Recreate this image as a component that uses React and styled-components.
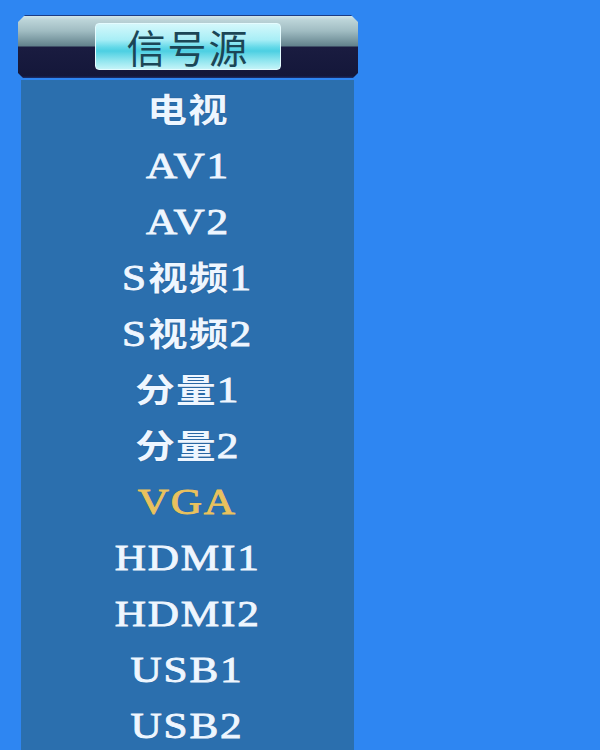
import React from "react";
import styled, { createGlobalStyle } from "styled-components";

const Global = createGlobalStyle`
  html, body { margin: 0; padding: 0; background: #2e86f2; }
  #root { width: 600px; height: 750px; overflow: hidden; }
`;

const Screen = styled.div`
  width: 600px;
  height: 750px;
  background: #2e86f2;
  padding: 15px 0 0 18px;
  box-sizing: border-box;
  overflow: hidden;
`;

const Panel = styled.div`
  width: 340px;
  display: flex;
  flex-direction: column;
`;

const Header = styled.div`
  height: 63px;
  box-sizing: border-box;
  padding-top: 8px;
  display: flex;
  justify-content: center;
  background: linear-gradient(
    to bottom,
    #1c3c84 0px,
    #1c3c84 1px,
    #d2e6ea 1px,
    #bcd4d8 5px,
    #a0bcc2 16px,
    #62828c 31px,
    #1a1c40 32px,
    #14173a 61px,
    #1c3070 63px
  );
  clip-path: polygon(7px 0, 333px 0, 340px 7px, 340px 58px, 335px 63px, 5px 63px, 0 58px, 0 7px);
`;

const TitleBadge = styled.div`
  width: 186px;
  height: 47px;
  box-sizing: border-box;
  border: 1px solid #e4fcff;
  border-radius: 4px;
  background: linear-gradient(
    to bottom,
    #d4f8fb 0%,
    #a8eef6 35%,
    #62d8e8 52%,
    #4ccfe2 60%,
    #8ce4ee 80%,
    #c4f4f8 100%
  );
  display: flex;
  align-items: center;
  justify-content: center;
  font-family: "Noto Sans CJK SC", "Noto Sans", sans-serif;
  font-weight: 400;
  font-size: 39px;
  letter-spacing: 2px;
  color: #1b4656;
  line-height: 1;
`;

const Body = styled.div`
  margin: 2px 4px 0 3px;
  padding-top: 2px;
  background: #2b6fae;
  height: 700px;
  display: flex;
  flex-direction: column;
  align-items: center;
`;

const Item = styled.div`
  height: 56px;
  display: flex;
  align-items: center;
  justify-content: center;
`;

const Label = styled.span`
  display: inline-block;
  transform: scaleX(1.2);
  white-space: nowrap;
  font-family: "Liberation Serif", "Noto Sans CJK SC", serif;
  font-weight: 400;
  font-size: 36px;
  line-height: 1;
  letter-spacing: 1.5px;
  color: ${(p) => (p.$active ? "#e9c25e" : "#eef6ff")};
  -webkit-text-stroke: 0.9px ${(p) => (p.$active ? "#e9c25e" : "#eef6ff")};
  text-shadow: 0 0 1px rgba(20, 40, 80, 0.5);
`;

const Han = styled.span`
  font-family: "Noto Sans CJK SC", sans-serif;
  font-weight: 700;
  font-size: 33px;
  letter-spacing: 1px;
  -webkit-text-stroke: 0;
`;

const items = [
  "电视",
  "AV1",
  "AV2",
  "S视频1",
  "S视频2",
  "分量1",
  "分量2",
  "VGA",
  "HDMI1",
  "HDMI2",
  "USB1",
  "USB2",
];

function renderLabel(text) {
  return text.split(/([\u4e00-\u9fff]+)/).filter(Boolean).map((part, i) =>
    /[\u4e00-\u9fff]/.test(part) ? <Han key={i}>{part}</Han> : <React.Fragment key={i}>{part}</React.Fragment>
  );
}

export default function App() {
  return (
    <>
      <Global />
      <Screen>
        <Panel>
          <Header>
            <TitleBadge>信号源</TitleBadge>
          </Header>
          <Body>
            {items.map((t) => (
              <Item key={t}>
                <Label $active={t === "VGA"}>{renderLabel(t)}</Label>
              </Item>
            ))}
          </Body>
        </Panel>
      </Screen>
    </>
  );
}
